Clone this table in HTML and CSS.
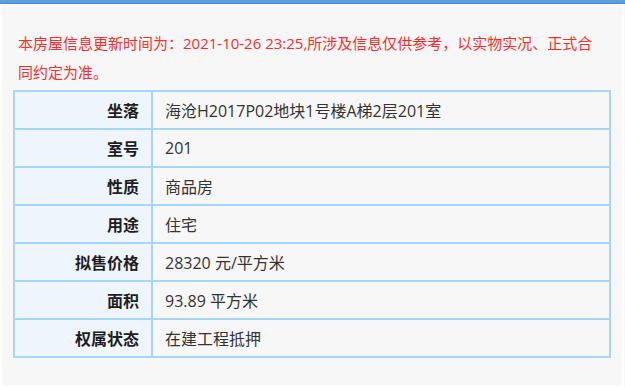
FILE: index.html
```html
<!DOCTYPE html>
<html lang="zh-CN">
<head>
<meta charset="utf-8">
<title>房屋信息</title>
<link rel="stylesheet" href="styles.css">
</head>
<body>
<div class="topbar"></div>
<div class="panel">
  <p class="notice">本房屋信息更新时间为：2021-10-26 23:25,所涉及信息仅供参考，以实物实况、正式合同约定为准。</p>
  <table class="info">
    <tr><th>坐落</th><td>海沧H2017P02地块1号楼A梯2层201室</td></tr>
    <tr><th>室号</th><td>201</td></tr>
    <tr><th>性质</th><td>商品房</td></tr>
    <tr><th>用途</th><td>住宅</td></tr>
    <tr><th>拟售价格</th><td>28320 元/平方米</td></tr>
    <tr><th>面积</th><td>93.89 平方米</td></tr>
    <tr><th>权属状态</th><td>在建工程抵押</td></tr>
  </table>
</div>
</body>
</html>
```
FILE: styles.css
```css
html, body {
  margin: 0;
  padding: 0;
}
body {
  width: 625px;
  height: 387px;
  background: #f7f7f7;
  font-family: "Open Sans", "Noto Sans CJK SC", sans-serif;
  overflow: hidden;
}
.topbar {
  height: 3px;
  background: #5c9ee0;
  border-bottom: 1px solid #4a86c8;
}
.panel {
  box-sizing: border-box;
  height: 383px;
  width: 624px;
  border-left: 2px solid #ffffff;
  border-right: 2px solid #ffffff;
  border-bottom: 2px solid #ffffff;
  padding: 25px 0 0 11px;
}
.notice {
  margin: 0;
  width: 578px;
  color: #ff2b2b;
  font-size: 15px;
  line-height: 29px;
  padding-left: 5px;
}
.info {
  margin-top: 3px;
  width: 598px;
  border-collapse: collapse;
  border: 2px solid #a5d5fb;
}
.info th, .info td {
  border: 2px solid #a5d5fb;
  height: 36px;
  padding: 0;
  font-size: 16px;
}
.info th {
  width: 124px;
  padding-right: 12px;
  text-align: right;
  background: #eef5fd;
  color: #1e1e1e;
  font-weight: bold;
}
.info td {
  padding-left: 12px;
  text-align: left;
  color: #333333;
}
```
